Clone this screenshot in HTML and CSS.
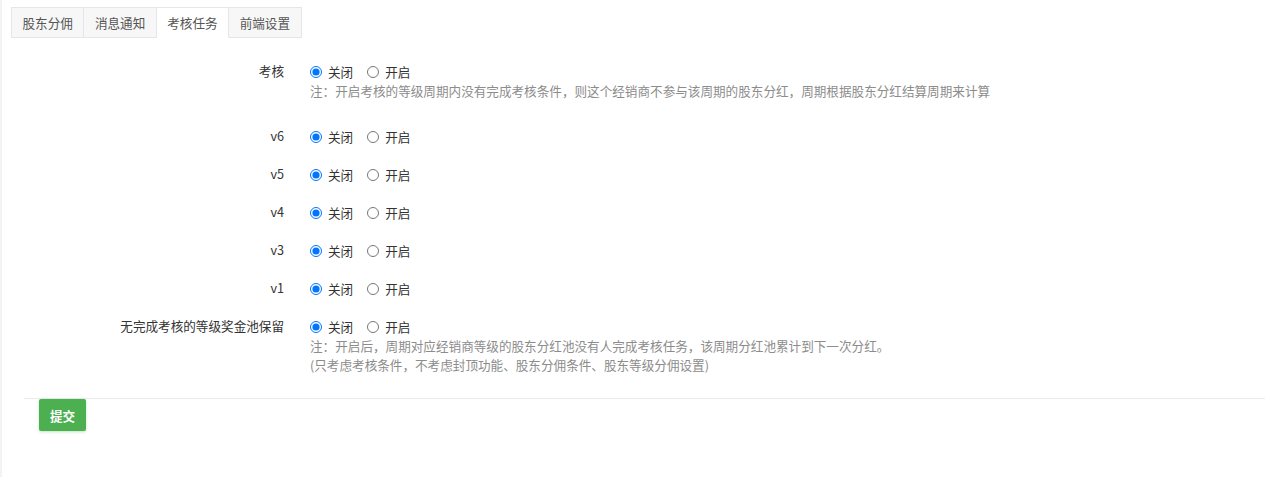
FILE: index.html
```html
<!DOCTYPE html>
<html lang="zh-CN">
  <head>
    <meta charset="UTF-8" />
    <meta name="viewport" content="width=device-width, initial-scale=1.0" />
    <title>考核任务</title>
    <link rel="stylesheet" href="styles.css">
  </head>
  <body>
    <div id="page">
      <ul class="tabs">
        <li class="tab">股东分佣</li>
        <li class="tab">消息通知</li>
        <li class="tab active">考核任务</li>
        <li class="tab">前端设置</li>
      </ul>

      <form class="settings">
        <div class="row first">
          <label class="label">考核</label>
          <div class="field">
            <div class="radios">
              <label class="radio"><input type="radio" name="kaohe" checked />关闭</label>
              <label class="radio"><input type="radio" name="kaohe" />开启</label>
            </div>
            <p class="help">注：开启考核的等级周期内没有完成考核条件，则这个经销商不参与该周期的股东分红，周期根据股东分红结算周期来计算</p>
          </div>
        </div>

        <div class="row">
          <label class="label">v6</label>
          <div class="field">
            <div class="radios">
              <label class="radio"><input type="radio" name="v6" checked />关闭</label>
              <label class="radio"><input type="radio" name="v6" />开启</label>
            </div>
          </div>
        </div>
        <div class="row">
          <label class="label">v5</label>
          <div class="field">
            <div class="radios">
              <label class="radio"><input type="radio" name="v5" checked />关闭</label>
              <label class="radio"><input type="radio" name="v5" />开启</label>
            </div>
          </div>
        </div>
        <div class="row">
          <label class="label">v4</label>
          <div class="field">
            <div class="radios">
              <label class="radio"><input type="radio" name="v4" checked />关闭</label>
              <label class="radio"><input type="radio" name="v4" />开启</label>
            </div>
          </div>
        </div>
        <div class="row">
          <label class="label">v3</label>
          <div class="field">
            <div class="radios">
              <label class="radio"><input type="radio" name="v3" checked />关闭</label>
              <label class="radio"><input type="radio" name="v3" />开启</label>
            </div>
          </div>
        </div>
        <div class="row">
          <label class="label">v1</label>
          <div class="field">
            <div class="radios">
              <label class="radio"><input type="radio" name="v1" checked />关闭</label>
              <label class="radio"><input type="radio" name="v1" />开启</label>
            </div>
          </div>
        </div>

        <div class="row last">
          <label class="label">无完成考核的等级奖金池保留</label>
          <div class="field">
            <div class="radios">
              <label class="radio"><input type="radio" name="pool" checked />关闭</label>
              <label class="radio"><input type="radio" name="pool" />开启</label>
            </div>
            <p class="help">注：开启后，周期对应经销商等级的股东分红池没有人完成考核任务，该周期分红池累计到下一次分红。</p>
            <p class="help">(只考虑考核条件，不考虑封顶功能、股东分佣条件、股东等级分佣设置)</p>
          </div>
        </div>

        <div class="actions">
          <button type="button" class="btn-submit">提交</button>
        </div>
      </form>
    </div>
  </body>
</html>
```

FILE: styles.css
```css
html,
body {
  height: 100%;
}
body {
  margin: 0;
  background: #fff;
  font-family: "Noto Sans CJK SC", "Microsoft YaHei", sans-serif;
  font-size: 12.6px;
  color: #333;
  border-left: 2px solid #f3f3f3;
  box-sizing: border-box;
}
#page {
  padding: 7px 0 0 9px;
}

/* tabs */
.tabs {
  list-style: none;
  margin: 0;
  padding: 0;
  display: flex;
}
.tab {
  height: 29px;
  line-height: 29px;
  padding: 0 10.5px;
  border: 1px solid #e6e6e6;
  border-left: none;
  background: #f7f7f7;
  color: #555;
  white-space: nowrap;
}
.tab:first-child {
  border-left: 1px solid #e6e6e6;
}
.tab.active {
  background: #fff;
  border-bottom-color: #fff;
}

/* form */
.settings {
  margin-top: 23px;
  padding-left: 13px;
}
.row {
  display: flex;
  margin-bottom: 18px;
}
.row.first {
  margin-bottom: 26px;
}
.row.last {
  margin-bottom: 24px;
}
.label {
  width: 260px;
  flex: none;
  text-align: right;
  line-height: 20px;
  color: #333;
}
.field {
  padding-left: 26px;
}
.radios {
  display: flex;
  height: 20px;
  align-items: center;
}
.radio {
  display: flex;
  align-items: center;
  margin-right: 14px;
  color: #333;
}
.radio input {
  width: 12px;
  height: 12px;
  margin: 1px 6px 0 0;
}
.help {
  margin: 0;
  line-height: 19px;
  color: #8c8c8c;
}

.actions {
  border-top: 1px solid #ececec;
  padding-left: 15px;
}
.btn-submit {
  width: 47px;
  height: 32px;
  padding: 0;
  border: none;
  border-radius: 2px;
  background: #4caf50;
  color: #fff;
  font-family: inherit;
  font-size: 12.6px;
  font-weight: bold;
  box-shadow: 0 1px 3px rgba(76, 175, 80, 0.35);
}
```
